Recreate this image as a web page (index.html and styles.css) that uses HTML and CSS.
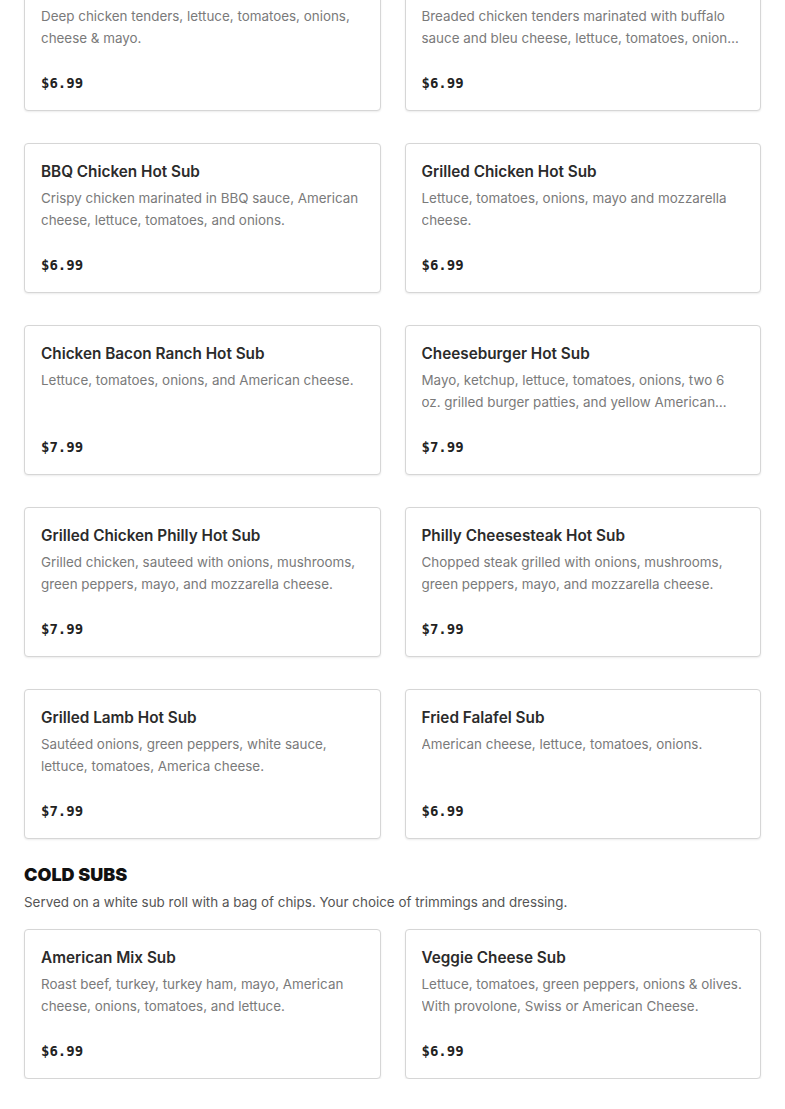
FILE: index.html
```html
<!DOCTYPE html>
<html>
<head>
<meta charset="utf-8">
<link rel="stylesheet" href="styles.css">
</head>
<body>
<main class="menu">
  <section class="section section-hot">
    <div class="grid">
      <div class="card"><h3 class="title">Chicken Tender Hot Sub</h3><p class="desc">Deep chicken tenders, lettuce, tomatoes, onions, cheese &amp; mayo.</p><div class="price">$6.99</div></div>
      <div class="card"><h3 class="title">Buffalo Chicken Hot Sub</h3><p class="desc">Breaded chicken tenders marinated with buffalo sauce and bleu cheese, lettuce, tomatoes, onions and mayo.</p><div class="price">$6.99</div></div>
      <div class="card"><h3 class="title">BBQ Chicken Hot Sub</h3><p class="desc">Crispy chicken marinated in BBQ sauce, American cheese, lettuce, tomatoes, and onions.</p><div class="price">$6.99</div></div>
      <div class="card"><h3 class="title">Grilled Chicken Hot Sub</h3><p class="desc">Lettuce, tomatoes, onions, mayo and mozzarella cheese.</p><div class="price">$6.99</div></div>
      <div class="card"><h3 class="title">Chicken Bacon Ranch Hot Sub</h3><p class="desc">Lettuce, tomatoes, onions, and American cheese.</p><div class="price">$7.99</div></div>
      <div class="card"><h3 class="title">Cheeseburger Hot Sub</h3><p class="desc">Mayo, ketchup, lettuce, tomatoes, onions, two 6 oz. grilled burger patties, and yellow American cheese.</p><div class="price">$7.99</div></div>
      <div class="card"><h3 class="title">Grilled Chicken Philly Hot Sub</h3><p class="desc">Grilled chicken, sauteed with onions, mushrooms, green peppers, mayo, and mozzarella cheese.</p><div class="price">$7.99</div></div>
      <div class="card"><h3 class="title">Philly Cheesesteak Hot Sub</h3><p class="desc">Chopped steak grilled with onions, mushrooms, green peppers, mayo, and mozzarella cheese.</p><div class="price">$7.99</div></div>
      <div class="card"><h3 class="title">Grilled Lamb Hot Sub</h3><p class="desc">Sautéed onions, green peppers, white sauce, lettuce, tomatoes, America cheese.</p><div class="price">$7.99</div></div>
      <div class="card"><h3 class="title">Fried Falafel Sub</h3><p class="desc">American cheese, lettuce, tomatoes, onions.</p><div class="price">$6.99</div></div>
    </div>
  </section>
  <section class="section">
    <h2 class="section-title">COLD SUBS</h2>
    <p class="section-sub">Served on a white sub roll with a bag of chips. Your choice of trimmings and dressing.</p>
    <div class="grid">
      <div class="card"><h3 class="title">American Mix Sub</h3><p class="desc">Roast beef, turkey, turkey ham, mayo, American cheese, onions, tomatoes, and lettuce.</p><div class="price">$6.99</div></div>
      <div class="card"><h3 class="title">Veggie Cheese Sub</h3><p class="desc">Lettuce, tomatoes, green peppers, onions &amp; olives. With provolone, Swiss or American Cheese.</p><div class="price">$6.99</div></div>
    </div>
  </section>
</main>
</body>
</html>
```
FILE: styles.css
```css
* { box-sizing: border-box; }
html, body { margin: 0; padding: 0; background: #fff; }
body { font-family: Inter, "Open Sans", "Liberation Sans", sans-serif; color: #2d2d2d; overflow: hidden; }
.menu { padding: 0 24px; margin-top: -39px; }
.grid {
  display: grid;
  grid-template-columns: 1fr 1fr;
  column-gap: 24px;
  row-gap: 32px;
}
.card {
  display: flex;
  flex-direction: column;
  height: 150px;
  border: 1px solid #d6d6d6;
  border-radius: 4px;
  box-shadow: 0 1px 2px rgba(0,0,0,0.08);
  padding: 16px 16px 17px;
  background: #fff;
}
.title {
  margin: 0 0 3px;
  font-size: 15.3px;
  line-height: 24px;
  font-weight: 600;
  color: #2b2b2b;
}
.desc {
  margin: 0;
  font-size: 13.4px;
  line-height: 22px;
  color: #7a7a7a;
  display: -webkit-box;
  -webkit-line-clamp: 2;
  -webkit-box-orient: vertical;
  overflow: hidden;
}
.price {
  margin-top: auto;
  font-family: "DejaVu Sans Mono", "Liberation Mono", monospace;
  font-weight: bold;
  font-size: 14px;
  line-height: 20px;
  color: #222;
}
.section-hot { margin-bottom: 24px; }
.section-title {
  margin: 0;
  font-family: Inter, "Liberation Sans", sans-serif;
  font-weight: 900;
  font-size: 18px;
  line-height: 24px;
  color: #111;
}
.section-sub {
  margin: 4px 0 16px;
  font-size: 13.4px;
  line-height: 22px;
  color: #555;
}
```
